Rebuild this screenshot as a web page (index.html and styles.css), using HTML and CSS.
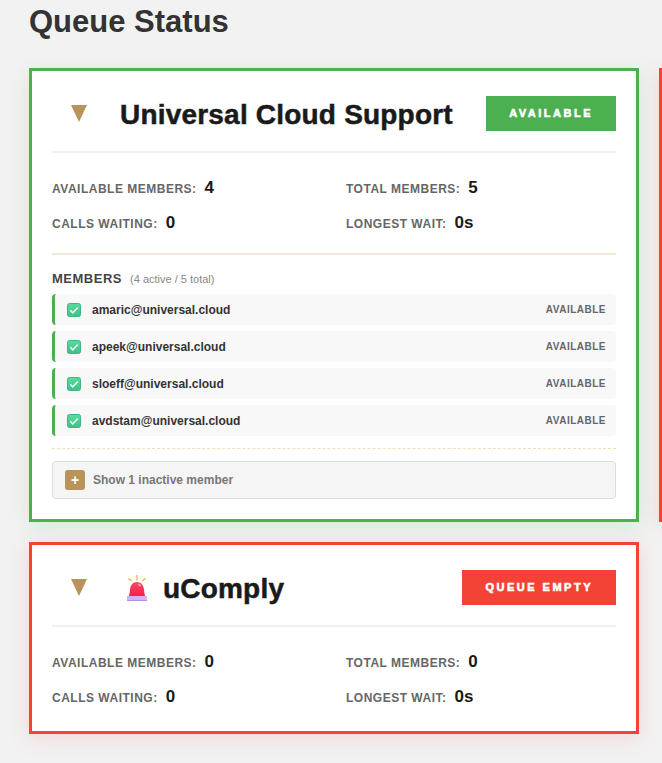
FILE: index.html
```html
<!DOCTYPE html>
<html lang="en">
<head>
    <meta charset="UTF-8">
    <meta name="viewport" content="width=device-width, initial-scale=1.0">
    <title>Queue Status</title>
    <link rel="stylesheet" href="styles.css">
</head>
<body>
    <svg class="defs" width="0" height="0">
        <defs>
            <linearGradient id="checkFill" x1="0" y1="0" x2="0" y2="1">
                <stop offset="0" stop-color="#5adba0"/>
                <stop offset="1" stop-color="#40bf86"/>
            </linearGradient>
            <linearGradient id="domeFill" x1="0" y1="0" x2="0" y2="1">
                <stop offset="0" stop-color="#f94a63"/>
                <stop offset="1" stop-color="#f61f4c"/>
            </linearGradient>
        </defs>
    </svg>
    <h1>Queue Status</h1>
    <div class="queue-grid">
        <section class="queue-card card-ok">
            <div class="card-header">
                <span class="toggle"></span>
                <h2>Universal Cloud Support</h2>
                <span class="badge badge-ok">AVAILABLE</span>
            </div>
            <div class="stats">
                <div class="stat"><span class="stat-label">AVAILABLE MEMBERS:</span><span class="stat-value">4</span></div>
                <div class="stat"><span class="stat-label">TOTAL MEMBERS:</span><span class="stat-value">5</span></div>
                <div class="stat"><span class="stat-label">CALLS WAITING:</span><span class="stat-value">0</span></div>
                <div class="stat"><span class="stat-label">LONGEST WAIT:</span><span class="stat-value">0s</span></div>
            </div>
            <div class="members">
                <div class="members-title">MEMBERS <small>(4 active / 5 total)</small></div>
                <div class="member">
                    <svg class="check" viewBox="0 0 14 14"><rect x="0.5" y="0.5" width="13" height="13" rx="2" fill="url(#checkFill)" stroke="#3fb583"/><path d="M3.2 7.2l2.6 2.6 5-5.3" fill="none" stroke="#eafff4" stroke-width="1.5"/></svg>
                    <span class="member-name">amaric@universal.cloud</span>
                    <span class="member-status">AVAILABLE</span>
                </div>
                <div class="member">
                    <svg class="check" viewBox="0 0 14 14"><rect x="0.5" y="0.5" width="13" height="13" rx="2" fill="url(#checkFill)" stroke="#3fb583"/><path d="M3.2 7.2l2.6 2.6 5-5.3" fill="none" stroke="#eafff4" stroke-width="1.5"/></svg>
                    <span class="member-name">apeek@universal.cloud</span>
                    <span class="member-status">AVAILABLE</span>
                </div>
                <div class="member">
                    <svg class="check" viewBox="0 0 14 14"><rect x="0.5" y="0.5" width="13" height="13" rx="2" fill="url(#checkFill)" stroke="#3fb583"/><path d="M3.2 7.2l2.6 2.6 5-5.3" fill="none" stroke="#eafff4" stroke-width="1.5"/></svg>
                    <span class="member-name">sloeff@universal.cloud</span>
                    <span class="member-status">AVAILABLE</span>
                </div>
                <div class="member">
                    <svg class="check" viewBox="0 0 14 14"><rect x="0.5" y="0.5" width="13" height="13" rx="2" fill="url(#checkFill)" stroke="#3fb583"/><path d="M3.2 7.2l2.6 2.6 5-5.3" fill="none" stroke="#eafff4" stroke-width="1.5"/></svg>
                    <span class="member-name">avdstam@universal.cloud</span>
                    <span class="member-status">AVAILABLE</span>
                </div>
                <div class="inactive">
                    <button class="inactive-btn"><span class="plus">+</span>Show 1 inactive member</button>
                </div>
            </div>
        </section>
        <section class="queue-card card-empty"></section>
        <section class="queue-card card-empty">
            <div class="card-header">
                <span class="toggle"></span>
                <svg class="alarm" viewBox="0 0 20 26">
                    <path d="M9.3 0h1.4v5.5H9.3zM1 4l1-1.200 3.200 2.600-1 1.200zM19 4l-1-1.200-3.200 2.600 1 1.200z" fill="#f7bd4b"/>
                    <path d="M2 21c.5-2 .8-4 1-6.500C3.400 10 6 7 10 7s6.600 3 7 7.500c.2 2.500.5 4.500 1 6.500z" fill="url(#domeFill)"/>
                    <path d="M11.500 8.500c1.300.3 2.300 1.200 2.800 2.500l-1.600.4c-.4-.7-1-1.300-1.700-1.500z" fill="#ff9fb1"/>
                    <rect y="21" width="20" height="4" fill="#d3b5ee"/>
                    <rect y="25" width="20" height="1" fill="#b78fdf"/>
                </svg>
                <h2>uComply</h2>
                <span class="badge badge-empty">QUEUE EMPTY</span>
            </div>
            <div class="stats">
                <div class="stat"><span class="stat-label">AVAILABLE MEMBERS:</span><span class="stat-value">0</span></div>
                <div class="stat"><span class="stat-label">TOTAL MEMBERS:</span><span class="stat-value">0</span></div>
                <div class="stat"><span class="stat-label">CALLS WAITING:</span><span class="stat-value">0</span></div>
                <div class="stat"><span class="stat-label">LONGEST WAIT:</span><span class="stat-value">0s</span></div>
            </div>
        </section>
    </div>
</body>
</html>
```
FILE: styles.css
```css
html, body {
    height: 763px;
    overflow: hidden;
}

body {
    font-family: "Liberation Sans", Arial, sans-serif;
    background-color: #f2f2f2;
    margin: 0;
    padding: 0 0 0 29px;
    color: #1a1a1a;
}

.defs {
    display: block;
}

h1 {
    font-size: 31px;
    line-height: 37px;
    color: #333;
    margin: 3px 0 28px;
}

.queue-grid {
    display: grid;
    grid-template-columns: 610px 610px;
    gap: 20px;
    align-items: stretch;
    width: 1240px;
}

.queue-card {
    background-color: white;
    border: 3px solid #4caf50;
    padding: 25px 20px 20px;
}

.card-ok {
    border-color: #4caf50;
    box-shadow: 0 4px 20px rgba(76, 175, 80, 0.15);
}

.card-empty {
    border-color: #f44336;
    box-shadow: 0 4px 20px rgba(244, 67, 54, 0.15);
}

.card-header {
    display: flex;
    align-items: center;
    height: 35px;
    padding-bottom: 20px;
    border-bottom: 2px solid #f0f0f0;
}

.toggle {
    width: 0;
    height: 0;
    margin: 0 33px 0 19px;
    border-left: 8.5px solid transparent;
    border-right: 8.5px solid transparent;
    border-top: 17px solid #b8935a;
    flex: none;
}

.alarm {
    width: 20px;
    height: 26px;
    margin: 0 16px 0 7px;
    flex: none;
}

h2 {
    flex: 1;
    margin: 2px 0 0;
    font-size: 28px;
    line-height: 35px;
    letter-spacing: 0.2px;
    color: #1a1a1a;
    -webkit-text-stroke: 0.5px #1a1a1a;
}

.badge {
    height: 35px;
    line-height: 35px;
    padding: 0 23px;
    color: white;
    font-size: 11px;
    font-weight: bold;
    letter-spacing: 2.5px;
    -webkit-text-stroke: 0.6px white;
}

.badge-ok {
    background-color: #4caf50;
}

.badge-empty {
    background-color: #f44336;
}

.stats {
    display: grid;
    grid-template-columns: 294px 1fr;
    row-gap: 15px;
    padding: 25px 0 4px;
}

.stat {
    display: flex;
    align-items: baseline;
    height: 20px;
}

.stat-label {
    font-size: 12px;
    font-weight: bold;
    letter-spacing: 0.5px;
    color: #666;
    margin-right: 8px;
}

.stat-value {
    font-size: 17px;
    font-weight: bold;
    color: #1a1a1a;
}

.members {
    margin-top: 16px;
    padding-top: 17px;
    border-top: 2px solid #f5e6d8;
}

.members-title {
    font-size: 13px;
    line-height: 14px;
    font-weight: bold;
    letter-spacing: 0.5px;
    color: #444;
    margin-bottom: 8px;
}

.members-title small {
    font-size: 11px;
    font-weight: normal;
    letter-spacing: 0;
    color: #888;
    margin-left: 4px;
}

.member {
    display: flex;
    align-items: center;
    height: 31px;
    margin-bottom: 6px;
    padding: 0 10px 0 12px;
    background-color: #f8f8f8;
    border-left: 3px solid #4caf50;
    border-radius: 4px;
}

.check {
    width: 14px;
    height: 14px;
    margin-right: 11px;
    flex: none;
}

.member-name {
    flex: 1;
    font-size: 12px;
    font-weight: bold;
    color: #333;
}

.member-status {
    font-size: 10px;
    font-weight: bold;
    letter-spacing: 0.5px;
    color: #666;
}

.inactive {
    margin-top: 12px;
    padding-top: 12px;
    border-top: 1px dashed #ebe0b8;
}

.inactive-btn {
    display: flex;
    align-items: center;
    width: 100%;
    height: 38px;
    padding: 0 12px;
    background-color: #f5f5f5;
    border: 1px solid #ddd;
    border-radius: 4px;
    font-family: inherit;
    font-size: 12px;
    font-weight: bold;
    color: #777;
}

.plus {
    width: 20px;
    height: 20px;
    line-height: 20px;
    margin-right: 8px;
    background-color: #b8935a;
    border-radius: 3px;
    color: white;
    font-size: 14px;
    text-align: center;
}
```
